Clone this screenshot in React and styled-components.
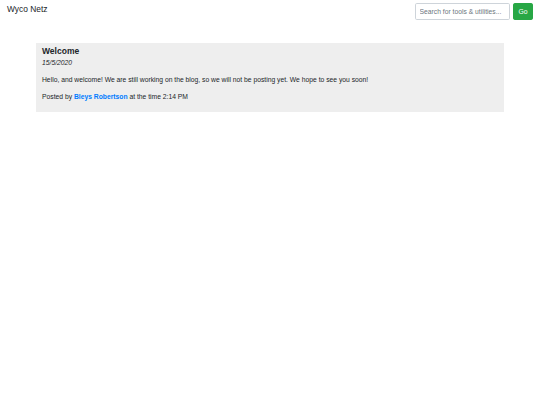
import React from "react";
import styled, { createGlobalStyle } from "styled-components";

const Global = createGlobalStyle`
  html, body { margin: 0; padding: 0; background: #fff; }
  body {
    font-family: "Liberation Sans", Arial, sans-serif;
    font-size: 6.75px;
    line-height: 1.5;
    color: #212529;
  }
  * { box-sizing: border-box; }
`;

const Navbar = styled.nav`
  display: flex;
  align-items: center;
  justify-content: space-between;
  padding: 3px 7px;
`;

const Brand = styled.a`
  font-size: 8.4px;
  line-height: 1.5;
  color: #212529;
  text-decoration: none;
  margin-top: -4px;
`;

const SearchForm = styled.form`
  display: flex;
  align-items: center;
  gap: 3.5px;
`;

const SearchInput = styled.input`
  width: 95px;
  height: 17px;
  padding: 2px 4px;
  font-family: inherit;
  font-size: 6.75px;
  color: #495057;
  border: 1px solid #ced4da;
  border-radius: 1.75px;
  background: #fff;
  outline: none;
  &::placeholder { color: #6c757d; }
`;

const GoButton = styled.button`
  width: 20px;
  height: 17px;
  padding: 0;
  font-family: inherit;
  font-size: 6.75px;
  color: #fff;
  background: #28a745;
  border: 1px solid #28a745;
  border-radius: 1.75px;
`;

const Main = styled.main`
  width: 468px;
  margin: 20px auto 0;
`;

const Post = styled.article`
  background: #eeeeee;
  padding: 3px 6px 2.5px;
`;

const Title = styled.h5`
  margin: 0 0 2px;
  font-size: 8.5px;
  font-weight: 700;
  line-height: 1.2;
`;

const DateLine = styled.p`
  margin: 0 0 7px;
  font-style: italic;
`;

const Text = styled.p`
  margin: 0 0 7px;
`;

const Author = styled.a`
  color: #007bff;
  font-weight: 700;
  text-decoration: none;
`;

export default function App() {
  return (
    <>
      <Global />
      <Navbar>
        <Brand href="#">Wyco Netz</Brand>
        <SearchForm onSubmit={(e) => e.preventDefault()}>
          <SearchInput type="text" placeholder="Search for tools & utilities..." />
          <GoButton type="submit">Go</GoButton>
        </SearchForm>
      </Navbar>
      <Main>
        <Post>
          <Title>Welcome</Title>
          <DateLine>15/5/2020</DateLine>
          <Text>
            Hello, and welcome! We are still working on the blog, so we will not be posting yet. We hope to see you soon!
          </Text>
          <Text>
            Posted by <Author href="#">Bleys Robertson</Author> at the time 2:14 PM
          </Text>
        </Post>
      </Main>
    </>
  );
}
